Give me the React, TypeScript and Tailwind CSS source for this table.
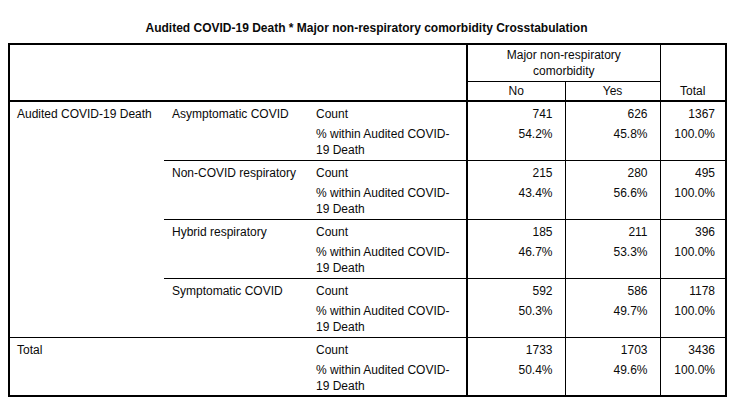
const groups = [
  { label: 'Asymptomatic COVID', count: ['741', '626', '1367'], pct: ['54.2%', '45.8%', '100.0%'] },
  { label: 'Non-COVID respiratory', count: ['215', '280', '495'], pct: ['43.4%', '56.6%', '100.0%'] },
  { label: 'Hybrid respiratory', count: ['185', '211', '396'], pct: ['46.7%', '53.3%', '100.0%'] },
  { label: 'Symptomatic COVID', count: ['592', '586', '1178'], pct: ['50.3%', '49.7%', '100.0%'] },
];

const total = { count: ['1733', '1703', '3436'], pct: ['50.4%', '49.6%', '100.0%'] };

function NumCells({ values, top }: { values: string[]; top: boolean }) {
  const line = top ? 'border-t border-t-black' : '';
  return (
    <>
      <td className={`border-l-2 border-l-black pr-[12px] text-right align-top ${line}`}>{values[0]}</td>
      <td className={`border-l border-l-black pr-[12px] text-right align-top ${line}`}>{values[1]}</td>
      <td className={`border-l border-l-black pr-[10px] text-right align-top ${line}`}>{values[2]}</td>
    </>
  );
}

function StatRows({ first, label, count, pct, top }: {
  first: React.ReactNode;
  label: React.ReactNode;
  count: string[];
  pct: string[];
  top: boolean;
}) {
  const line = top ? 'border-t border-t-black' : '';
  return (
    <>
      <tr className="h-[21px] [&>td]:pt-[4px]">
        {first}
        {label}
        <td className={`pl-[7px] align-top ${line}`}>Count</td>
        <NumCells values={count} top={top} />
      </tr>
      <tr className="h-[38px] [&>td]:pt-[4px]">
        <td className="pl-[7px] align-top">
          % within Audited COVID-
          <br />
          19 Death
        </td>
        <NumCells values={pct} top={false} />
      </tr>
    </>
  );
}

export default function App() {
  return (
    <div className="min-h-screen bg-white pl-[8px] pt-[20px] text-[12px] leading-[16px] text-[#0a0a0a] [font-family:'Liberation_Sans',Arial,sans-serif]">
      <div className="w-[717px] text-center font-bold">
        Audited COVID-19 Death * Major non-respiratory comorbidity Crosstabulation
      </div>
      <table className="mt-[7px] w-[717px] table-fixed border-collapse border-2 border-black">
        <colgroup>
          <col className="w-[155px]" />
          <col className="w-[145px]" />
          <col className="w-[158px]" />
          <col className="w-[98px]" />
          <col className="w-[95px]" />
          <col className="w-[66px]" />
        </colgroup>
        <thead>
          <tr className="h-[37px]">
            <td colSpan={3} rowSpan={2} className="border-b-2 border-b-black" />
            <td colSpan={2} className="border-l-2 border-l-black border-b border-b-black pt-[2px] text-center align-top">
              Major non-respiratory
              <br />
              comorbidity
            </td>
            <td rowSpan={2} className="border-l border-l-black border-b-2 border-b-black pb-[1px] text-center align-bottom">
              Total
            </td>
          </tr>
          <tr className="h-[20px]">
            <td className="border-l-2 border-l-black border-b-2 border-b-black text-center">No</td>
            <td className="border-l border-l-black border-b-2 border-b-black text-center">Yes</td>
          </tr>
        </thead>
        <tbody>
          {groups.map((g, i) => (
            <StatRows
              key={g.label}
              top={i > 0}
              first={
                i === 0 ? (
                  <td rowSpan={8} className="pl-[7px] align-top">
                    Audited COVID-19 Death
                  </td>
                ) : null
              }
              label={
                <td rowSpan={2} className={`pl-[8px] align-top ${i > 0 ? 'border-t border-t-black' : ''}`}>
                  {g.label}
                </td>
              }
              count={g.count}
              pct={g.pct}
            />
          ))}
          <StatRows
            top
            first={null}
            label={
              <td colSpan={2} rowSpan={2} className="border-t border-t-black pl-[7px] align-top">
                Total
              </td>
            }
            count={total.count}
            pct={total.pct}
          />
        </tbody>
      </table>
    </div>
  );
}
